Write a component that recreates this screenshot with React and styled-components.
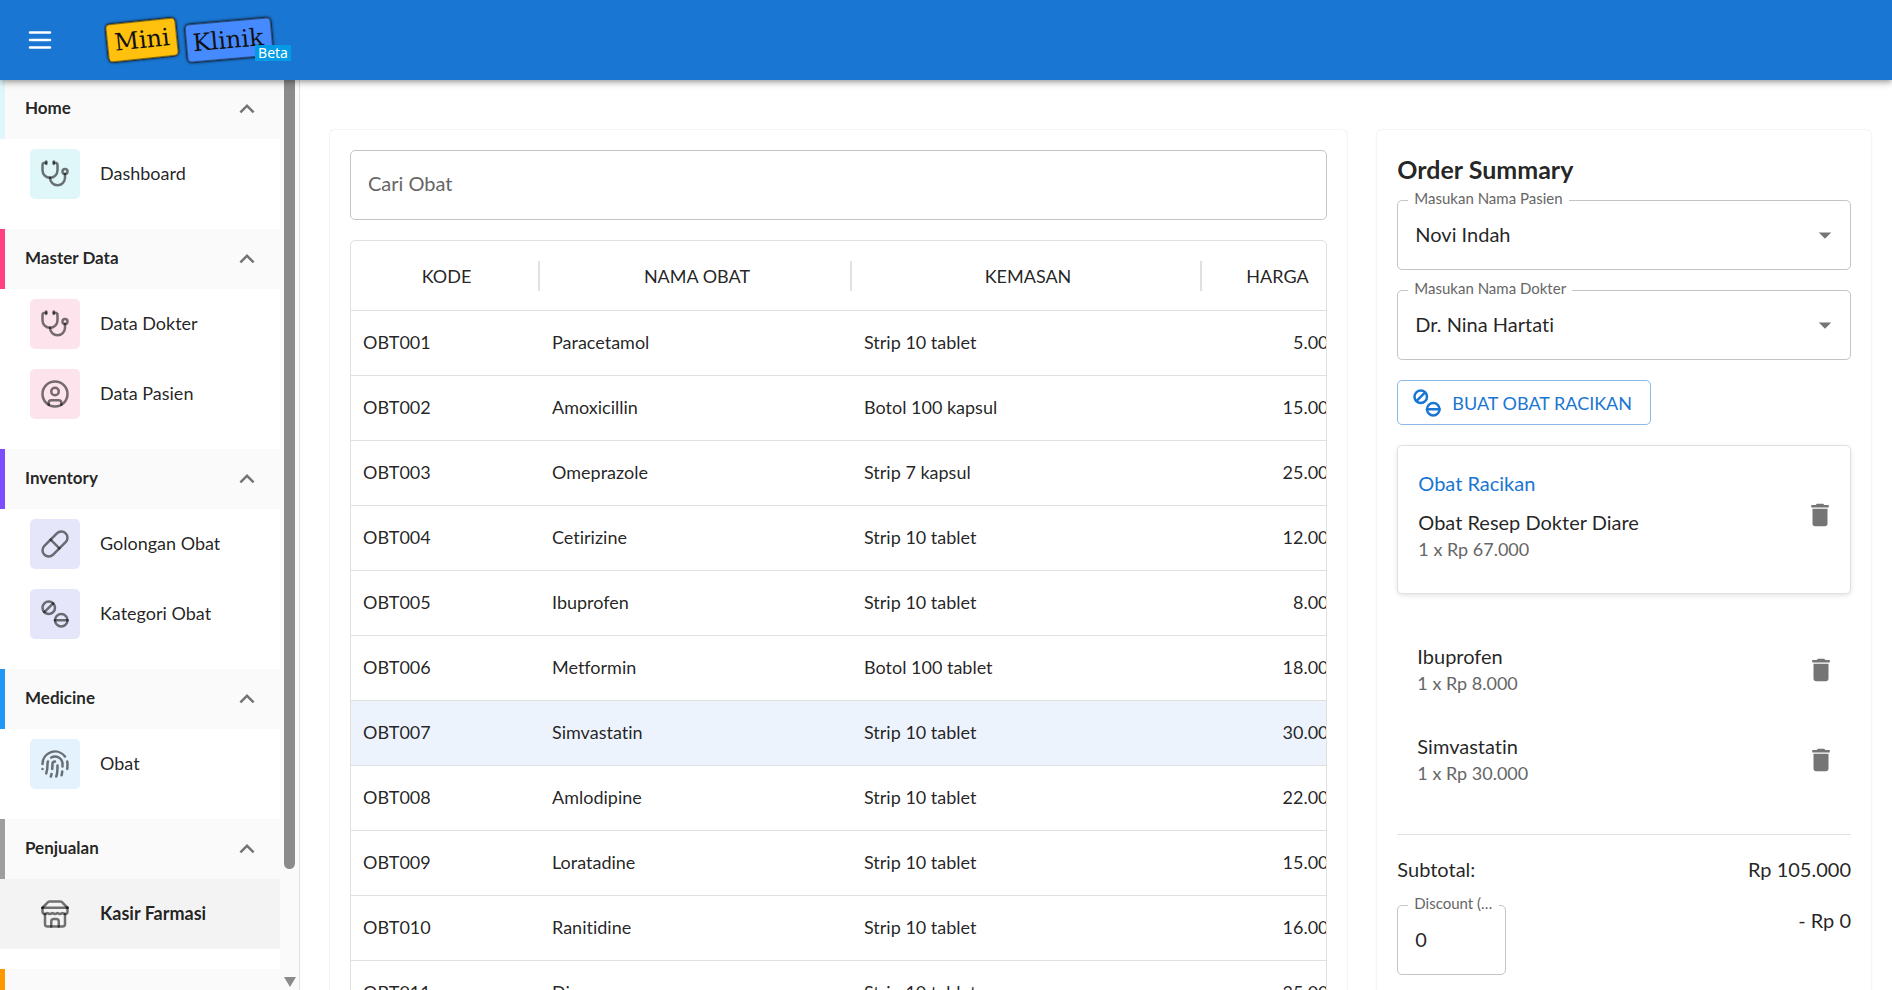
import React, { useState } from 'react';
import styled, { createGlobalStyle, css } from 'styled-components';
import { Stethoscope, CircleUser, Pill, Tablets, FingerprintPattern } from 'lucide-react';
import { MdExpandLess, MdDelete, MdArrowDropDown } from 'react-icons/md';

const GlobalStyle = createGlobalStyle`
  *, *::before, *::after {
    box-sizing: border-box;
  }
  body {
    margin: 0;
    background: #fff;
    color: rgba(0, 0, 0, 0.87);
    font-family: Lato, "Noto Sans", sans-serif;
    font-size: 20px;
    line-height: 30px;
    font-variant-ligatures: none;
  }
  button, input, select {
    font: inherit;
    color: inherit;
  }
`;

/* ---------- shell ---------- */

const Page = styled.div`
  display: flex;
  flex-direction: column;
  height: 100vh;
  overflow: hidden;
`;

const TopBar = styled.header`
  position: relative;
  z-index: 2;
  display: flex;
  align-items: center;
  flex-shrink: 0;
  gap: 44px;
  height: 80px;
  padding: 0 20px;
  background: #1976d2;
  color: #fff;
  box-shadow: 0 2px 4px -1px rgba(0, 0, 0, 0.2), 0 4px 5px rgba(0, 0, 0, 0.14), 0 1px 10px rgba(0, 0, 0, 0.12);
`;

const IconButton = styled.button`
  display: inline-flex;
  align-items: center;
  justify-content: center;
  flex-shrink: 0;
  width: 40px;
  height: 40px;
  padding: 0;
  border: 0;
  border-radius: 50%;
  background: transparent;
  color: ${({ $color }) => $color || 'rgba(0, 0, 0, 0.54)'};
  cursor: pointer;
`;

const Body = styled.div`
  display: flex;
  flex: 1;
  min-height: 0;
`;

/* ---------- sidebar ---------- */

const Sidebar = styled.aside`
  display: flex;
  flex-shrink: 0;
  width: 300px;
  border-right: 1px solid #e0e0e0;
  background: #fff;
`;

const Nav = styled.nav`
  flex: 1;
  margin-top: -1px;
  overflow: hidden;
`;

const NavGroup = styled.section`
  padding-bottom: 20px;
`;

const GroupHeader = styled.button`
  display: flex;
  align-items: center;
  justify-content: space-between;
  width: 100%;
  height: 60px;
  padding: 0 18px 0 20px;
  border: 0;
  border-left: 5px solid ${({ $accent }) => $accent};
  background: #fafafa;
  font-size: 17px;
  font-weight: 700;
  text-align: left;
  cursor: pointer;

  svg {
    color: rgba(0, 0, 0, 0.54);
  }
`;

const NavText = styled.span`
  padding-bottom: 3px;
`;

const NavItem = styled.a`
  display: flex;
  align-items: center;
  gap: 20px;
  height: 70px;
  padding: 0 30px;
  color: inherit;
  font-size: 18px;
  text-decoration: none;
  ${({ $active }) => $active && css`
    background: #f3f3f3;
    font-weight: 700;
  `}
`;

const NavIcon = styled.span`
  display: flex;
  align-items: center;
  justify-content: center;
  width: 50px;
  height: 50px;
  border-radius: 5px;
  background: ${({ $tint }) => $tint};
  color: rgba(0, 0, 0, 0.54);
`;

const ScrollTrack = styled.div`
  display: flex;
  flex-direction: column;
  align-items: center;
  width: 19px;
  padding-bottom: 3px;
  background: #fafafa;
`;

const ScrollThumb = styled.div`
  width: 11px;
  height: 87%;
  margin-bottom: auto;
  border-radius: 0 0 6px 6px;
  background: #8b8b8b;
`;

const ScrollArrow = styled.div`
  border: 6px solid transparent;
  border-top: 10px solid #8b8b8b;
  border-bottom: 0;
`;

/* ---------- content ---------- */

const Content = styled.main`
  display: grid;
  grid-template-columns: 2fr 1fr;
  flex: 1;
  min-width: 0;
  padding: 50px 21px 0 0;
`;

const Column = styled.div`
  display: grid;
  min-width: 0;
  padding-left: 30px;
`;

const Card = styled.section`
  min-width: 0;
  padding: 20px;
  border-radius: 5px;
  background: #fff;
  box-shadow: 0 0 2px rgba(0, 0, 0, 0.16);
`;

const SearchInput = styled.input`
  display: block;
  width: 100%;
  height: 70px;
  padding: 0 17px 5px;
  border: 1px solid #c4c4c4;
  border-radius: 5px;
  background: transparent;
  outline: 0;

  &::placeholder {
    color: #666;
    opacity: 1;
  }
`;

const TableFrame = styled.div`
  margin-top: 20px;
  overflow: hidden;
  border: 1px solid #e0e0e0;
  border-radius: 5px;
`;

const Table = styled.table`
  width: 1000px;
  table-layout: fixed;
  border-collapse: separate;
  border-spacing: 0;
  font-size: 18px;
`;

const HeadCell = styled.th`
  width: ${({ $width }) => $width}px;
  height: 70px;
  padding: 0;
  border-bottom: 1px solid #e0e0e0;
  font-weight: 400;
`;

const HeadLabel = styled.div`
  padding-left: 4px;
  border-right: 2px solid #e0e0e0;
  line-height: 30px;
`;

const Row = styled.tr`
  background: ${({ $selected }) => ($selected ? '#edf3fc' : 'transparent')};
`;

const Cell = styled.td`
  height: 65px;
  padding: 0 12px 2px;
  border-bottom: 1px solid #e0e0e0;
  text-align: ${({ $align }) => $align || 'left'};
`;

/* ---------- order summary ---------- */

const Title = styled.h2`
  margin: 0;
  padding: 0 0 12px;
  font-size: 25px;
  font-weight: 700;
  line-height: 38px;
`;

const Field = styled.div`
  position: relative;
  display: flex;
  align-items: center;
  width: ${({ $width }) => $width || '100%'};
  height: 70px;
  margin-bottom: 20px;
  border: 1px solid #c4c4c4;
  border-radius: 5px;

  > svg {
    position: absolute;
    right: 10px;
    color: rgba(0, 0, 0, 0.54);
    pointer-events: none;
  }
`;

const FieldLabel = styled.label`
  position: absolute;
  top: -13px;
  left: 10px;
  max-width: calc(100% - 16px);
  padding: 0 6px;
  overflow: hidden;
  background: #fff;
  color: #666;
  font-size: 15px;
  line-height: 20px;
  white-space: nowrap;
  text-overflow: ellipsis;
`;

const controlStyles = css`
  width: 100%;
  height: 100%;
  padding: 0 17px 2px;
  border: 0;
  background: transparent;
  outline: 0;
`;

const Select = styled.select`
  ${controlStyles}
  appearance: none;
`;

const NumberInput = styled.input`
  ${controlStyles}
`;

const OutlinedButton = styled.button`
  display: inline-flex;
  align-items: center;
  gap: 10px;
  height: 45px;
  padding: 0 18px 0 14px;
  border: 1px solid rgba(25, 118, 210, 0.5);
  border-radius: 5px;
  background: transparent;
  color: #1976d2;
  font-size: 18px;
  text-transform: uppercase;
  vertical-align: top;
  cursor: pointer;
`;

const RecipeCard = styled.article`
  display: flex;
  align-items: center;
  justify-content: space-between;
  margin: 20px 0 31px;
  padding: 20px 10px 30px 20px;
  border: 1px solid #e0e0e0;
  border-radius: 5px;
  box-shadow: 0 2px 5px rgba(0, 0, 0, 0.1);
`;

const RecipeLabel = styled.p`
  margin: 0 0 9px;
  color: #1976d2;
  line-height: 34px;
`;

const ItemList = styled.ul`
  margin: 0;
  padding: 0;
  list-style: none;
`;

const Item = styled.li`
  display: flex;
  align-items: center;
  justify-content: space-between;
  padding: 18px 10px 18px 20px;
`;

const ItemName = styled.p`
  margin: 0;
  line-height: 26px;
`;

const ItemPrice = styled.p`
  margin: 0;
  color: #666;
  font-size: 18px;
  line-height: 28px;
`;

const Divider = styled.hr`
  margin: 29px 0 19px;
  border: 0;
  border-top: 1px solid #e0e0e0;
`;

const TotalRow = styled.div`
  display: flex;
  align-items: flex-start;
  justify-content: space-between;
  margin-bottom: 21px;
`;

/* ---------- drawings ---------- */

const MenuIcon = () => (
  <svg width="30" height="30" viewBox="0 0 24 24" fill="none" stroke="currentColor" strokeWidth="2" strokeLinecap="round">
    <path d="M4 6h16M4 12h16M4 18h16" />
  </svg>
);

const StoreIcon = ({ size }) => (
  <svg width={size} height={size} viewBox="0 0 24 24" fill="none" stroke="currentColor" strokeWidth="2" strokeLinecap="round" strokeLinejoin="round">
    <path d="m2 7 4.41-4.41A2 2 0 0 1 7.83 2h8.34a2 2 0 0 1 1.42.59L22 7" />
    <path d="M4 12v8a2 2 0 0 0 2 2h12a2 2 0 0 0 2-2v-8" />
    <path d="M15 22v-4a2 2 0 0 0-2-2h-2a2 2 0 0 0-2 2v4" />
    <path d="M2 7h20" />
    <path d="M22 7v3a2 2 0 0 1-2 2a2.7 2.7 0 0 1-1.59-.63.7.7 0 0 0-.82 0A2.7 2.7 0 0 1 16 12a2.7 2.7 0 0 1-1.59-.63.7.7 0 0 0-.82 0A2.7 2.7 0 0 1 12 12a2.7 2.7 0 0 1-1.59-.63.7.7 0 0 0-.82 0A2.7 2.7 0 0 1 8 12a2.7 2.7 0 0 1-1.59-.63.7.7 0 0 0-.82 0A2.7 2.7 0 0 1 4 12a2 2 0 0 1-2-2V7" />
  </svg>
);

const Logo = () => (
  <svg width="190" height="56" viewBox="104 12 190 56" role="img" aria-label="Mini Klinik Beta">
    <defs>
      <filter id="logo-shadow" x="-20%" y="-20%" width="140%" height="140%">
        <feDropShadow dx="0" dy="0" stdDeviation="1.5" floodColor="#000" floodOpacity="0.8" />
      </filter>
    </defs>
    <g fontFamily="DejaVu Serif, serif" fontSize="24" textAnchor="middle" fill="#111">
      <g transform="rotate(-6 142 40)">
        <rect x="107" y="21" width="70" height="38" rx="4" fill="#ffc107" stroke="#1a1a1a" strokeWidth="1" filter="url(#logo-shadow)" />
        <text x="142" y="48">Mini</text>
      </g>
      <g transform="rotate(-5 229 39)">
        <rect x="186" y="21" width="86" height="38" rx="4" fill="#448aff" stroke="#1a1a1a" strokeWidth="1" filter="url(#logo-shadow)" />
        <text x="228" y="48">Klinik</text>
      </g>
    </g>
    <rect x="255" y="45" width="36" height="16" fill="#039be5" />
    <text x="273" y="58" fontFamily="Noto Sans, sans-serif" fontSize="14" textAnchor="middle" fill="#fff">Beta</text>
  </svg>
);

/* ---------- data ---------- */

const menu = [
  { title: 'Home', accent: '#e0f7fa', tint: '#e0f7fa', items: [{ label: 'Dashboard', icon: Stethoscope }] },
  {
    title: 'Master Data',
    accent: '#ff4081',
    tint: '#fde4ec',
    items: [{ label: 'Data Dokter', icon: Stethoscope }, { label: 'Data Pasien', icon: CircleUser }],
  },
  {
    title: 'Inventory',
    accent: '#7c4dff',
    tint: '#e6e6fa',
    items: [{ label: 'Golongan Obat', icon: Pill }, { label: 'Kategori Obat', icon: Tablets }],
  },
  { title: 'Medicine', accent: '#2196f3', tint: '#e3f2fd', items: [{ label: 'Obat', icon: FingerprintPattern }] },
  { title: 'Penjualan', accent: '#9e9e9e', tint: 'transparent', items: [{ label: 'Kasir Farmasi', icon: StoreIcon, active: true }] },
  { title: '', accent: '#ff9800', tint: '#fff3e0', items: [] },
];

const medicines = [
  ['OBT001', 'Paracetamol', 'Strip 10 tablet', '5.000'],
  ['OBT002', 'Amoxicillin', 'Botol 100 kapsul', '15.000'],
  ['OBT003', 'Omeprazole', 'Strip 7 kapsul', '25.000'],
  ['OBT004', 'Cetirizine', 'Strip 10 tablet', '12.000'],
  ['OBT005', 'Ibuprofen', 'Strip 10 tablet', '8.000'],
  ['OBT006', 'Metformin', 'Botol 100 tablet', '18.000'],
  ['OBT007', 'Simvastatin', 'Strip 10 tablet', '30.000'],
  ['OBT008', 'Amlodipine', 'Strip 10 tablet', '22.000'],
  ['OBT009', 'Loratadine', 'Strip 10 tablet', '15.000'],
  ['OBT010', 'Ranitidine', 'Strip 10 tablet', '16.000'],
  ['OBT011', 'Diazepam', 'Strip 10 tablet', '35.000'],
];

const cart = [
  { name: 'Ibuprofen', price: '1 x Rp 8.000' },
  { name: 'Simvastatin', price: '1 x Rp 30.000' },
];

/* ---------- components ---------- */

const DeleteButton = ({ name }) => (
  <IconButton type="button" aria-label={`Hapus ${name}`}>
    <MdDelete size={30} />
  </IconButton>
);

const SelectField = ({ id, label, options }) => (
  <Field>
    <FieldLabel htmlFor={id}>{label}</FieldLabel>
    <Select id={id}>
      {options.map((option) => <option key={option}>{option}</option>)}
    </Select>
    <MdArrowDropDown size={30} />
  </Field>
);

const SideMenu = () => (
  <Sidebar>
    <Nav>
      {menu.map(({ title, accent, tint, items }) => (
        <NavGroup key={accent}>
          <GroupHeader type="button" $accent={accent} aria-label={title || 'Lainnya'}>
            <NavText>{title}</NavText>
            <MdExpandLess size={30} />
          </GroupHeader>
          {items.map(({ label, icon: Icon, active }) => (
            <NavItem key={label} href="#" $active={active}>
              <NavIcon $tint={tint}><Icon size={30} /></NavIcon>
              <NavText>{label}</NavText>
            </NavItem>
          ))}
        </NavGroup>
      ))}
    </Nav>
    <ScrollTrack aria-hidden="true">
      <ScrollThumb />
      <ScrollArrow />
    </ScrollTrack>
  </Sidebar>
);

const MedicineTable = () => {
  const [selected, setSelected] = useState('OBT007');

  return (
    <TableFrame>
      <Table>
        <thead>
          <tr>
            <HeadCell $width={189}><HeadLabel>KODE</HeadLabel></HeadCell>
            <HeadCell $width={312}><HeadLabel>NAMA OBAT</HeadLabel></HeadCell>
            <HeadCell $width={350}><HeadLabel>KEMASAN</HeadLabel></HeadCell>
            <HeadCell $width={149}><HeadLabel>HARGA</HeadLabel></HeadCell>
          </tr>
        </thead>
        <tbody>
          {medicines.map(([code, name, pack, price]) => (
            <Row key={code} $selected={code === selected} onClick={() => setSelected(code)}>
              <Cell>{code}</Cell>
              <Cell>{name}</Cell>
              <Cell>{pack}</Cell>
              <Cell $align="right">{price}</Cell>
            </Row>
          ))}
        </tbody>
      </Table>
    </TableFrame>
  );
};

const OrderSummary = () => (
  <Card>
    <Title>Order Summary</Title>
    <SelectField id="pasien" label="Masukan Nama Pasien" options={['Novi Indah']} />
    <SelectField id="dokter" label="Masukan Nama Dokter" options={['Dr. Nina Hartati']} />
    <OutlinedButton type="button">
      <Tablets size={30} />
      Buat Obat Racikan
    </OutlinedButton>
    <RecipeCard>
      <div>
        <RecipeLabel>Obat Racikan</RecipeLabel>
        <ItemName>Obat Resep Dokter Diare</ItemName>
        <ItemPrice>1 x Rp 67.000</ItemPrice>
      </div>
      <DeleteButton name="Obat Resep Dokter Diare" />
    </RecipeCard>
    <ItemList>
      {cart.map(({ name, price }) => (
        <Item key={name}>
          <div>
            <ItemName>{name}</ItemName>
            <ItemPrice>{price}</ItemPrice>
          </div>
          <DeleteButton name={name} />
        </Item>
      ))}
    </ItemList>
    <Divider />
    <TotalRow>
      <span>Subtotal:</span>
      <span>Rp 105.000</span>
    </TotalRow>
    <TotalRow>
      <Field $width="109px">
        <FieldLabel htmlFor="discount">Discount (%)</FieldLabel>
        <NumberInput id="discount" inputMode="numeric" defaultValue="0" />
      </Field>
      <span>- Rp 0</span>
    </TotalRow>
  </Card>
);

function App() {
  return (
    <Page>
      <GlobalStyle />
      <TopBar>
        <IconButton type="button" aria-label="Menu" $color="#fff"><MenuIcon /></IconButton>
        <Logo />
      </TopBar>
      <Body>
        <SideMenu />
        <Content>
          <Column>
            <Card>
              <SearchInput type="text" placeholder="Cari Obat" aria-label="Cari Obat" />
              <MedicineTable />
            </Card>
          </Column>
          <Column>
            <OrderSummary />
          </Column>
        </Content>
      </Body>
    </Page>
  );
}

export default App;
